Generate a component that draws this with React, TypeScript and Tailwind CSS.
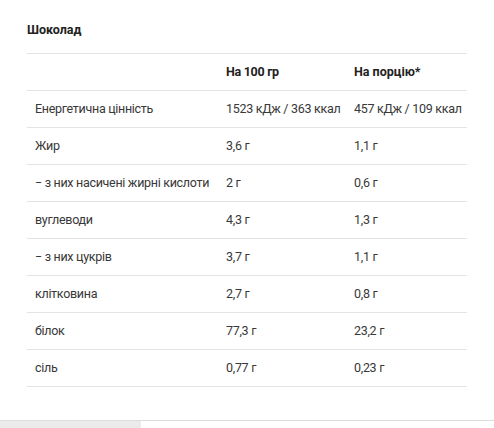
import React from 'react';

interface Row {
  name: string;
  per100: string;
  perPortion: string;
}

const rows: Row[] = [
  { name: 'Енергетична цінність', per100: '1523 кДж / 363 ккал', perPortion: '457 кДж / 109 ккал' },
  { name: 'Жир', per100: '3,6 г', perPortion: '1,1 г' },
  { name: '− з них насичені жирні кислоти', per100: '2 г', perPortion: '0,6 г' },
  { name: 'вуглеводи', per100: '4,3 г', perPortion: '1,3 г' },
  { name: '− з них цукрів', per100: '3,7 г', perPortion: '1,1 г' },
  { name: 'клітковина', per100: '2,7 г', perPortion: '0,8 г' },
  { name: 'білок', per100: '77,3 г', perPortion: '23,2 г' },
  { name: 'сіль', per100: '0,77 г', perPortion: '0,23 г' },
];

const App: React.FC = () => {
  return (
    <div className="w-[494px] h-[428px] bg-white flex flex-col font-['Roboto',sans-serif] text-[12.5px] tracking-[-0.3px] overflow-hidden">
      <div className="px-[27px] pt-[21px]">
        <h3 className="font-bold text-[#222] leading-[18px] h-[32px] tracking-normal">Шоколад</h3>
        <div className="w-[440px] border-t border-[#e3e3e3]">
          <div className="flex h-[37px] items-center border-b border-[#e3e3e3] font-bold text-[#222]">
            <div className="w-[191px] px-2"></div>
            <div className="w-[128px] px-2">На 100 гр</div>
            <div className="w-[121px] px-2 tracking-normal">На порцію*</div>
          </div>
          {rows.map((row) => (
            <div key={row.name} className="flex h-[37px] items-center border-b border-[#e3e3e3] text-[#383838]">
              <div className="w-[191px] px-2 whitespace-nowrap">{row.name}</div>
              <div className="w-[128px] px-2 whitespace-nowrap">{row.per100}</div>
              <div className="w-[121px] px-2 whitespace-nowrap">{row.perPortion}</div>
            </div>
          ))}
        </div>
      </div>
      <div className="mt-auto border-t border-[#dcdcdc] flex">
        <div className="w-[141px] h-[7px] bg-[#ebebeb]"></div>
      </div>
    </div>
  );
};

export default App;
